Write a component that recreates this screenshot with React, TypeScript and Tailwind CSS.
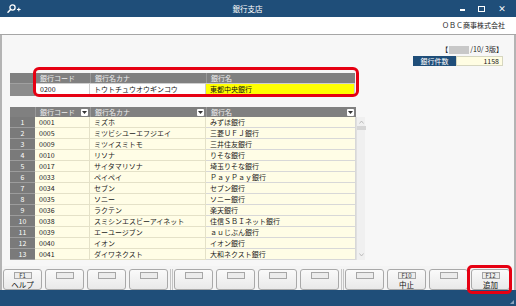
import React from "react";

const FONT = { fontFamily: '"Noto Sans CJK JP", "Noto Sans", sans-serif' };

const rows = [
  ["0001", "ミズホ", "みずほ銀行"],
  ["0005", "ミツビシユーエフジエイ", "三菱ＵＦＪ銀行"],
  ["0009", "ミツイスミトモ", "三井住友銀行"],
  ["0010", "リソナ", "りそな銀行"],
  ["0017", "サイタマリソナ", "埼玉りそな銀行"],
  ["0033", "ペイペイ", "ＰａｙＰａｙ銀行"],
  ["0034", "セブン", "セブン銀行"],
  ["0035", "ソニー", "ソニー銀行"],
  ["0036", "ラクテン", "楽天銀行"],
  ["0038", "スミシンエスビーアイネット", "住信ＳＢＩネット銀行"],
  ["0039", "エーユージブン", "ａｕじぶん銀行"],
  ["0040", "イオン", "イオン銀行"],
  ["0041", "ダイワネクスト", "大和ネクスト銀行"],
];

const keys: [string, string][] = [
  ["F1", "ヘルプ"], ["", ""], ["", ""], ["", ""],
  ["", ""], ["", ""], ["", ""], ["", ""],
  ["", ""], ["F10", "中止"], ["", ""], ["F12", "追加"],
];

const Drop = () => (
  <span className="ml-auto mr-[2px] flex h-[7px] w-[7px] items-center justify-center rounded-[1px] bg-white">
    <svg width="5" height="3" viewBox="0 0 5 3">
      <path d="M0 0h5L2.5 3z" fill="#333" />
    </svg>
  </span>
);

const FKey = ({ k, label }: { k: string; label: string }) => (
  <div className="flex h-[21px] w-[39px] flex-col items-center rounded-[3px] border border-[#a9a9a9] bg-gradient-to-b from-[#fafafa] to-[#e9e9e9] pt-[2px]">
    <div className="flex h-[7px] w-[18px] items-center justify-center border border-[#a6a6a6] bg-[#ececec] text-[6px] leading-none text-[#333]">
      {k}
    </div>
    <div className="mt-[1px] text-[7.5px] leading-[9px] text-[#111]">{label}</div>
  </div>
);

export default function App() {
  return (
    <div className="flex h-[306px] w-[516px] flex-col overflow-hidden bg-white" style={FONT}>
      {/* title bar */}
      <div className="flex h-[17px] items-center bg-[#1f4e79] px-[6px] text-white">
        <svg width="14" height="10" viewBox="0 0 14 10" className="ml-[1px]">
          <circle cx="5.5" cy="3.5" r="2.6" fill="none" stroke="white" strokeWidth="1.3" />
          <path d="M3.8 5.3L1 8.3" stroke="white" strokeWidth="1.5" strokeLinecap="round" />
          <path d="M10 5.5h3.6M11.8 3.7v3.6" stroke="white" strokeWidth="1" />
        </svg>
        <div className="flex-1 pl-[14px] text-center text-[7.5px]">銀行支店</div>
        <div className="flex items-center gap-[13px] pr-[4px] text-[8px] font-bold">
          <span className="mt-[3px] block h-[1.5px] w-[5px] bg-white" />
          <span className="block h-[6px] w-[7px] border-[1.5px] border-white" />
          <span className="leading-none">×</span>
        </div>
      </div>
      {/* company bar */}
      <div className="flex h-[18px] items-center justify-end border-b border-[#a6a6a6] bg-white pr-[11px] text-[7px] text-[#222]">
        ＯＢＣ商事株式会社
      </div>
      {/* content */}
      <div className="flex h-[231px] flex-col border-x-2 border-[#b4b4b4] bg-[#f7f7f7] pl-[8px]">
        <div className="flex flex-col items-end pr-[11px] pt-[9px]">
          <div className="flex h-[11px] items-center text-[7px] text-[#222]">
            <span>【</span>
            <span className="mx-[1px] h-[8px] w-[20px] bg-[#c8c8c8]" />
            <span>/10/ 3版】</span>
          </div>
          <div className="mt-[1px] flex h-[10px] text-[7px]">
            <div className="flex w-[43px] items-center justify-center bg-[#1f4e79] text-white">銀行件数</div>
            <div className="flex w-[47px] items-center justify-end border border-[#d6d6c0] bg-[#fffde3] pr-[3px] text-[#222]">1158</div>
          </div>
        </div>

        {/* selected bank */}
        <div className="relative mt-[7px] w-[345px] text-[7px]">
          <div className="flex h-[10px] bg-[#808080] text-[#eeeeee]">
            <div className="w-[25px]" />
            <div className="flex w-[55px] items-center border-l border-[#9a9a9a] pl-[4px]">銀行コード</div>
            <div className="flex w-[116px] items-center border-l border-[#9a9a9a] pl-[4px]">銀行名カナ</div>
            <div className="flex w-[149px] items-center border-l border-[#9a9a9a] pl-[4px]">銀行名</div>
          </div>
          <div className="flex h-[13px] text-[#111]">
            <div className="w-[25px] border-t border-[#a0a0a0] bg-[#8c8c8c]" />
            <div className="flex w-[55px] items-center border border-[#cfcfcf] bg-white pl-[4px]">0200</div>
            <div className="flex w-[116px] items-center border-y border-r border-[#cfcfcf] bg-white pl-[4px]">トウトチュウオウギンコウ</div>
            <div className="flex w-[149px] items-center border-y border-r border-[#cfcfcf] bg-[#ffff00] pl-[4px]">東都中央銀行</div>
          </div>
          <div className="absolute left-[23px] top-[-6px] h-[30px] w-[326px] rounded-[6px] border-[3px] border-[#e60012]" />
        </div>

        {/* list */}
        <div className="mt-[11px] flex w-[355px] text-[7px]">
          <div className="w-[346px]">
            <div className="flex h-[10px] bg-[#808080] text-[#eeeeee]">
              <div className="w-[25px]" />
              <div className="flex w-[55px] items-center border-l border-[#9a9a9a] pl-[4px]">銀行コード<Drop /></div>
              <div className="flex w-[116px] items-center border-l border-[#9a9a9a] pl-[4px]">銀行名カナ<Drop /></div>
              <div className="flex w-[150px] items-center border-l border-[#9a9a9a] pl-[4px]">銀行名<Drop /></div>
            </div>
            {rows.map((r, i) => (
              <div key={i} className="flex h-[11px] text-[#222]">
                <div className="flex w-[25px] items-center justify-center border-b border-[#9c9c9c] bg-[#7a7a7a] text-white">{i + 1}</div>
                <div className="flex w-[55px] items-center border-b border-r border-[#e4e1c8] bg-[#fffde6] pl-[4px]">{r[0]}</div>
                <div className="flex w-[116px] items-center border-b border-r border-[#e4e1c8] bg-[#fffde6] pl-[4px]">{r[1]}</div>
                <div className="flex w-[150px] items-center overflow-hidden whitespace-nowrap border-b border-r border-[#d8d8d8] bg-[#fffde6] pl-[4px]">{r[2]}</div>
              </div>
            ))}
          </div>
          <div className="mt-[10px] flex h-[143px] w-[9px] flex-col items-center border-l border-[#e0e0e0] bg-[#f0f0f0]">
            <svg width="5" height="4" viewBox="0 0 5 4" className="mt-[3px]">
              <path d="M0.5 3.5L2.5 1l2 2.5" fill="none" stroke="#b0b0b0" strokeWidth="0.8" />
            </svg>
            <div className="mt-[2px] h-[4px] w-[9px] bg-[#d6d6d6]" />
            <svg width="5" height="4" viewBox="0 0 5 4" className="mb-[3px] mt-auto">
              <path d="M0.5 0.5L2.5 3l2-2.5" fill="none" stroke="#b0b0b0" strokeWidth="0.8" />
            </svg>
          </div>
        </div>
      </div>

      {/* function keys */}
      <div className="flex h-[24px] items-end border-x-2 border-[#b4b4b4] bg-[#f4f4f4] pl-[1px]">
        {[0, 1, 2].map((g) => (
          <React.Fragment key={g}>
            {g > 0 && (
              <div className="mx-[1.5px] h-[21px] w-[3px] border-x border-[#c4c4c4]" />
            )}
            <div className="flex gap-[3px]">
              {keys.slice(g * 4, g * 4 + 4).map(([k, label], i) => (
                <div key={i} className="relative">
                  <FKey k={k} label={label} />
                  {g === 2 && i === 3 && (
                    <div className="absolute left-[-4px] top-[-4px] h-[29px] w-[45px] rounded-[5px] border-[3px] border-[#e60012]" />
                  )}
                </div>
              ))}
            </div>
          </React.Fragment>
        ))}
      </div>
      {/* status bar */}
      <div className="flex h-[16px] items-end justify-end bg-[#1f4e79] pr-[1px] pb-[1px]">
        <svg width="6" height="6" viewBox="0 0 6 6">
          <path d="M5 1v4H1z" fill="#8aa3bd" />
        </svg>
      </div>
    </div>
  );
}
